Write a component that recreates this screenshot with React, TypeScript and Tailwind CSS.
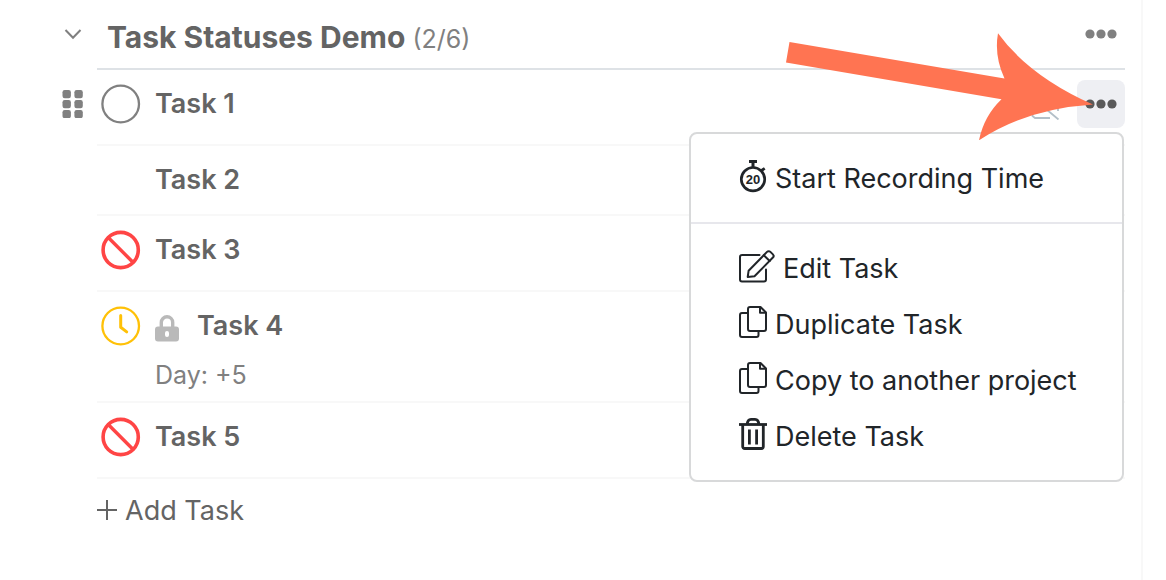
import React from 'react';

type Status = 'open' | 'none' | 'blocked' | 'waiting';

interface Task {
  id: number;
  title: string;
  status: Status;
  locked?: boolean;
  note?: string;
}

const tasks: Task[] = [
  { id: 1, title: 'Task 1', status: 'open' },
  { id: 2, title: 'Task 2', status: 'none' },
  { id: 3, title: 'Task 3', status: 'blocked' },
  { id: 4, title: 'Task 4', status: 'waiting', locked: true, note: 'Day: +5' },
  { id: 5, title: 'Task 5', status: 'blocked' },
];

const StatusIcon: React.FC<{ status: Status }> = ({ status }) => (
  <svg width="40" height="40" viewBox="0 0 40 40" fill="none" strokeLinecap="round" strokeLinejoin="round">
    {status === 'open' && <circle cx="19.7" cy="20" r="18.3" stroke="#808080" strokeWidth="2.3" />}
    {status === 'blocked' && (
      <g stroke="#ff4545">
        <circle cx="19.7" cy="20" r="17.6" strokeWidth="3.6" />
        <path d="M7.5 7.8l24.4 24.4" strokeWidth="3.4" />
      </g>
    )}
    {status === 'waiting' && (
      <g stroke="#ffc107">
        <circle cx="19.7" cy="20" r="18.3" strokeWidth="2.3" />
        <path d="M19.7 9.5V21.3l6 4.6" strokeWidth="3" />
      </g>
    )}
  </svg>
);

const LockIcon = () => (
  <svg width="24" height="28" viewBox="0 0 24 28" fill="none">
    <path d="M6.3 13V8.5a5.7 5.7 0 0 1 11.4 0V13" stroke="#b9b9b9" strokeWidth="3.4" />
    <rect x="0" y="12.5" width="24" height="15" rx="3" fill="#b9b9b9" />
    <rect x="10" y="17" width="4" height="6" rx="2" fill="#fff" />
  </svg>
);

const DragIcon = () => (
  <svg width="21" height="28" viewBox="0 0 21 28" fill="#808080">
    {[0, 10, 20].map((y) => (
      <g key={y}>
        <rect x="0.5" y={y} width="8.4" height="8.2" rx="2.2" />
        <rect x="12.4" y={y} width="8.4" height="8.2" rx="2.2" />
      </g>
    ))}
  </svg>
);

const DotsIcon = () => (
  <svg width="32" height="10" viewBox="0 0 32 10" fill="currentColor">
    <circle cx="5" cy="5" r="4.6" />
    <circle cx="16" cy="5" r="4.6" />
    <circle cx="27" cy="5" r="4.6" />
  </svg>
);

const StopwatchIcon = () => (
  <svg width="28" height="33" viewBox="0 0 28 33" fill="none" stroke="currentColor">
    <circle cx="14" cy="19.2" r="11.7" strokeWidth="2.7" />
    <path d="M10 1.6h8M14 2v6" strokeWidth="3" />
    <path d="M22.5 10.5l3.2-2.2" strokeWidth="2.8" />
    <text
      x="14"
      y="24"
      textAnchor="middle"
      fill="currentColor"
      stroke="none"
      fontFamily="'Liberation Sans', sans-serif"
      fontSize="13"
      fontWeight="700"
    >
      20
    </text>
  </svg>
);

const EditIcon = () => (
  <svg width="36" height="33" viewBox="0 0 36 33" fill="none" stroke="currentColor" strokeWidth="2" strokeLinecap="round" strokeLinejoin="round">
    <path d="M20.5 5H3a2 2 0 0 0-2 2v22.5a2 2 0 0 0 2 2h22a2 2 0 0 0 2-2V19.5" />
    <path d="M8.7 27l.9-6.2L28 1.9a2.4 2.4 0 0 1 3.4 0l2.5 2.5a2.2 2.2 0 0 1 0 3.1L15.5 26.3z" />
    <path d="M24.8 5.3l5.9 5.7" />
  </svg>
);

const CopyIcon = () => (
  <svg width="28" height="32" viewBox="0 0 28 32" fill="none" stroke="currentColor" strokeWidth="2" strokeLinejoin="round">
    <path d="M8 7H3a2 2 0 0 0-2 2v20a2 2 0 0 0 2 2h14.5a2 2 0 0 0 2-2v-3" />
    <path d="M11 1h10.5L27 6.5V23a2 2 0 0 1-2 2H11a2 2 0 0 1-2-2V3a2 2 0 0 1 2-2z" />
    <path d="M21 1.5v5.3h5.5" />
  </svg>
);

const TrashIcon = () => (
  <svg width="28" height="32" viewBox="0 0 28 32" fill="none" stroke="currentColor" strokeWidth="2.8">
    <path d="M0 6.5h28" />
    <path d="M8.3 6.5C8.3 3.2 9.8 1.4 12 1.4h4c2.2 0 3.7 1.8 3.7 5.1" />
    <path d="M3.7 6.5v22a2 2 0 0 0 2 2h16.6a2 2 0 0 0 2-2v-22" />
    <path d="M10.4 11.5v15M17.6 11.5v15" />
  </svg>
);

const taskActions: { label: string; icon: React.ReactNode }[] = [
  { label: 'Edit Task', icon: <EditIcon /> },
  { label: 'Duplicate Task', icon: <CopyIcon /> },
  { label: 'Copy to another project', icon: <CopyIcon /> },
  { label: 'Delete Task', icon: <TrashIcon /> },
];

const MenuItem: React.FC<{ label: string; icon: React.ReactNode }> = ({ label, icon }) => (
  <button role="menuitem" className="flex h-14 w-full items-center gap-2 px-12 text-left hover:bg-gray-50">
    <span className="shrink-0 pb-1">{icon}</span>
    <span className="pt-0.5 whitespace-nowrap">{label}</span>
  </button>
);

const TaskMenu = () => (
  <div
    role="menu"
    className="absolute top-full right-px z-10 mt-1 w-[435px] rounded-lg border-2 border-[#d8d9da] bg-white text-[27px] leading-9 text-[#212529]"
  >
    <div className="border-b-2 border-[#e7e7ec] py-4">
      <MenuItem label="Start Recording Time" icon={<StopwatchIcon />} />
    </div>
    <div className="py-4">
      {taskActions.map((action) => (
        <MenuItem key={action.label} {...action} />
      ))}
    </div>
  </div>
);

// Callout arrow that points at the open task menu button
const Pointer = () => (
  <svg
    className="pointer-events-none absolute right-8 bottom-[-12px] z-20"
    width="308"
    height="108"
    viewBox="785 32 308 108"
    aria-hidden="true"
  >
    <path
      fill="#ff7452"
      d="M789.5 42L1004.5 78.4Q994 56 998 33.2Q1029 76 1093 104.5Q1026 109 979 140.3Q984 116 1001.5 99.3L786 62.5Z"
    />
  </svg>
);

const HiddenIcon = () => (
  <svg width="32" height="32" viewBox="0 0 32 32" fill="none" stroke="#b3bfc8" strokeWidth="1.8">
    <path d="M21 30H6L3.5 28V12h15M5 11l24.5 20.5M29 12v11" />
  </svg>
);

const TaskRow: React.FC<{ task: Task }> = ({ task }) => (
  <li className="flex">
    <div className="w-[35px] shrink-0 pt-5">
      {task.id === 1 && (
        <button aria-label="Reorder task" className="block">
          <DragIcon />
        </button>
      )}
    </div>
    <div
      className={`min-w-0 flex-1 border-b-2 border-[#f8f8f8] pt-[14px] ${
        task.status === 'none' ? 'pb-[14px]' : task.note ? 'pb-2' : 'pb-5'
      }`}
    >
      <div className="flex h-10 items-center pl-1">
        <span className="w-[54px] shrink-0">
          <StatusIcon status={task.status} />
        </span>
        {task.locked && (
          <span className="w-[42px] shrink-0 pt-1">
            <LockIcon />
          </span>
        )}
        <h2 className="flex-1 truncate text-[27px] leading-9 font-semibold text-[#646464]">{task.title}</h2>
        {task.id === 1 && (
          <div className="relative flex items-center gap-4">
            <HiddenIcon />
            <button
              aria-label="Task actions"
              aria-haspopup="menu"
              aria-expanded="true"
              className="flex size-12 items-center justify-center rounded-lg bg-[#eeeff3] text-[#595959]"
            >
              <DotsIcon />
            </button>
            <TaskMenu />
            <Pointer />
          </div>
        )}
      </div>
      {task.note && <p className="mt-[11px] pl-[58px] text-[25px] leading-9 text-[#808080]">{task.note}</p>}
    </div>
  </li>
);

export default function App() {
  return (
    <div className="min-h-screen overflow-hidden bg-white pr-[23px] font-['Inter',sans-serif]">
      <main className="min-h-screen border-r-2 border-[#f8f8f8] pr-4 pl-[62px]">
        <header className="flex h-[70px]">
          <div className="w-[35px] shrink-0 pt-[26px]">
            <button aria-label="Collapse list" className="flex h-4 w-[22px] items-center justify-center">
              <svg width="18" height="12" viewBox="0 0 18 12" fill="none" stroke="#808080" strokeWidth="2">
                <path d="M1.5 2L9 9.8L16.5 2" />
              </svg>
            </button>
          </div>
          <div className="flex min-w-0 flex-1 items-center border-b-2 border-[#dee2e6] pt-2 pr-2 pl-[10px]">
            <h1 className="truncate text-[30px] leading-10 font-bold text-[#646464]">
              Task Statuses Demo <span className="text-[25px] font-normal text-[#808080]">(2/6)</span>
            </h1>
            <button aria-label="List actions" className="mb-2 ml-auto text-[#808080]">
              <DotsIcon />
            </button>
          </div>
        </header>

        <ul>
          {tasks.map((task) => (
            <TaskRow key={task.id} task={task} />
          ))}
        </ul>

        <button className="mt-3 ml-[35px] flex items-center gap-2 text-[27px] leading-9 text-[#646464]">
          <svg width="20" height="20" viewBox="0 0 20 20" stroke="currentColor" strokeWidth="2">
            <path d="M0 10h20M10 0v20" />
          </svg>
          <span className="pt-0.5">Add Task</span>
        </button>
      </main>
    </div>
  );
}
